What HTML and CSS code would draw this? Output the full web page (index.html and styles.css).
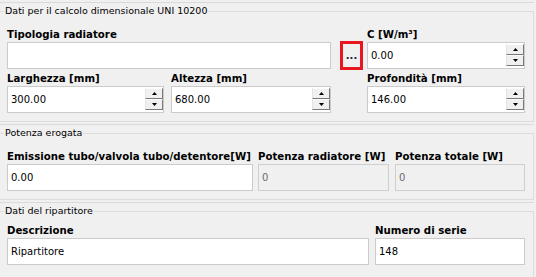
FILE: index.html
```html
<!DOCTYPE html>
<html>
<head>
<meta charset="utf-8">
<link rel="stylesheet" href="styles.css">
</head>
<body>
<div class="panel p1">
  <fieldset class="group">
    <legend>Dati per il calcolo dimensionale UNI 10200</legend>
    <div class="row">
      <div class="field w-tip"><label>Tipologia radiatore</label><div class="box"></div></div>
      <button class="dots">...</button>
      <div class="field w-c"><label>C [W/m³]</label>
        <div class="box"><span class="val">0.00</span>
          <span class="spin"><span class="sb"><svg width="5" height="3" viewBox="0 0 5 3"><path d="M2.5 0L5 3H0Z" fill="#000"/></svg></span><span class="sb"><svg width="5" height="3" viewBox="0 0 5 3"><path d="M0 0H5L2.5 3Z" fill="#000"/></svg></span></span>
        </div>
      </div>
    </div>
    <div class="row r2">
      <div class="field w-lar"><label>Larghezza [mm]</label>
        <div class="box"><span class="val">300.00</span>
          <span class="spin"><span class="sb"><svg width="5" height="3" viewBox="0 0 5 3"><path d="M2.5 0L5 3H0Z" fill="#000"/></svg></span><span class="sb"><svg width="5" height="3" viewBox="0 0 5 3"><path d="M0 0H5L2.5 3Z" fill="#000"/></svg></span></span>
        </div>
      </div>
      <div class="field w-alt"><label>Altezza [mm]</label>
        <div class="box"><span class="val">680.00</span>
          <span class="spin"><span class="sb"><svg width="5" height="3" viewBox="0 0 5 3"><path d="M2.5 0L5 3H0Z" fill="#000"/></svg></span><span class="sb"><svg width="5" height="3" viewBox="0 0 5 3"><path d="M0 0H5L2.5 3Z" fill="#000"/></svg></span></span>
        </div>
      </div>
      <div class="field w-pro"><label>Profondità [mm]</label>
        <div class="box"><span class="val">146.00</span>
          <span class="spin"><span class="sb"><svg width="5" height="3" viewBox="0 0 5 3"><path d="M2.5 0L5 3H0Z" fill="#000"/></svg></span><span class="sb"><svg width="5" height="3" viewBox="0 0 5 3"><path d="M0 0H5L2.5 3Z" fill="#000"/></svg></span></span>
        </div>
      </div>
    </div>
  </fieldset>
</div>
<div class="panel p2">
  <fieldset class="group">
    <legend>Potenza erogata</legend>
    <div class="row">
      <div class="field w-emi"><label>Emissione tubo/valvola tubo/detentore[W]</label><div class="box"><span class="val">0.00</span></div></div>
      <div class="field w-prad"><label>Potenza radiatore [W]</label><div class="box off"><span class="val">0</span></div></div>
      <div class="field w-ptot"><label>Potenza totale [W]</label><div class="box off"><span class="val">0</span></div></div>
    </div>
  </fieldset>
</div>
<div class="panel p3">
  <fieldset class="group">
    <legend>Dati del ripartitore</legend>
    <div class="row">
      <div class="field w-desc"><label>Descrizione</label><div class="box"><span class="val">Ripartitore</span></div></div>
      <div class="field w-num"><label>Numero di serie</label><div class="box"><span class="val">148</span></div></div>
    </div>
  </fieldset>
</div>
</body>
</html>
```
FILE: styles.css
```css
html, body {
  margin: 0;
  padding: 0;
  background: #f0f0f0;
}
body {
  font-family: "DejaVu Sans", sans-serif;
  font-size: 10px;
  color: #000;
  width: 536px;
  height: 277px;
  overflow: hidden;
}
.panel {
  width: 534px;
  border-top: 1px solid #dadada;
  padding: 2px 0 2px 0;
}
.p1 {
  margin-top: 2px;
}
.p3 {
  padding-bottom: 0;
}
.group {
  box-sizing: border-box;
  width: 535px;
  margin: 0 0 0 -1px;
  border: 1px solid #dcdcdc;
  padding: 11px 8px 8px 7px;
  min-width: 0;
}
.p3 .group {
  padding-top: 7px;
  height: 72px;
  border-bottom: none;
}
legend {
  font-size: 9.5px;
  line-height: 12px;
  padding: 0 1px;
  margin-left: -3px;
  color: #000;
}
.row {
  display: flex;
  align-items: flex-end;
}
.r2 {
  margin-top: 3px;
}
.field {
  display: flex;
  flex-direction: column;
}
.field label {
  font-weight: bold;
  font-size: 10.2px;
  line-height: 14px;
  height: 14px;
  white-space: nowrap;
}
.box {
  box-sizing: border-box;
  height: 27px;
  border: 1px solid #cbcbcb;
  background: #fff;
  display: flex;
  align-items: center;
  padding-left: 3px;
}
.box.off {
  background: #f0f0f0;
  color: #6d6d6d;
  border-color: #cfcfcf;
}
.val {
  flex: 1;
  white-space: nowrap;
}
.spin {
  align-self: flex-start;
  margin-top: 1px;
  width: 18px;
  display: flex;
  flex-direction: column;
}
.sb {
  box-sizing: border-box;
  height: 11px;
  background: #f0f0f0;
  border-top: 1px solid #fcfcfc;
  border-left: 1px solid #e3e3e3;
  border-right: 1px solid #787878;
  border-bottom: 1px solid #787878;
  display: flex;
  align-items: center;
  justify-content: center;
}
.sb svg {
  display: block;
}
.dots {
  box-sizing: border-box;
  width: 23px;
  height: 29px;
  margin: 0 0 -1px 9px;
  padding: 0;
  border: 3px solid #e8161e;
  background: #f0f0f0;
  font-family: "DejaVu Sans", sans-serif;
  font-weight: bold;
  font-size: 10px;
  color: #1c1c3c;
  display: flex;
  align-items: center;
  justify-content: center;
}
.w-tip { width: 324px; }
.w-c { width: 158px; margin-left: 4px; }
.w-lar { width: 157px; }
.w-alt { width: 160px; margin-left: 7px; }
.w-pro { width: 158px; margin-left: 36px; }
.w-emi { width: 246px; }
.w-prad { width: 131px; margin-left: 5px; }
.w-ptot { width: 130px; margin-left: 6px; }
.w-desc { width: 362px; }
.w-num { width: 150px; margin-left: 6px; }
```
